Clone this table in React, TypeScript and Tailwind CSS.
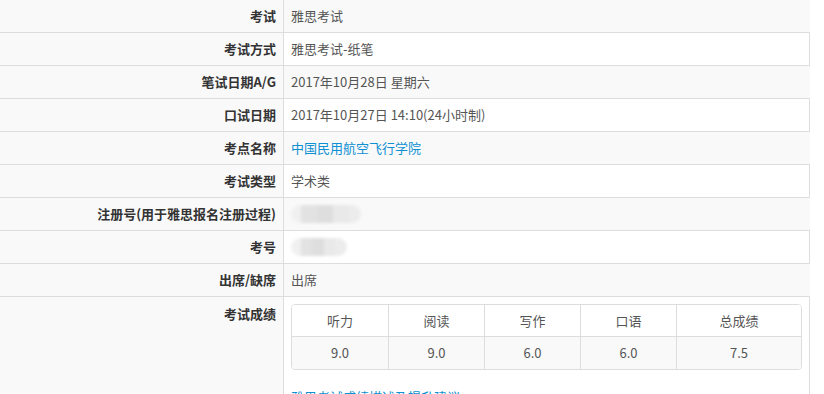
import React from "react";

type Row = {
  label: string;
  value?: React.ReactNode;
};

const font = { fontFamily: '"Noto Sans CJK SC", "Noto Sans", sans-serif' };

function Blur({ width }: { width: number }) {
  // masked personal number, drawn as a soft grey smudge
  return (
    <div className="relative h-[18px]" style={{ width }}>
      <div className="absolute inset-0 flex blur-[1.5px]">
        <div className="w-[10px] rounded-l-full bg-[#f0f0f0]" />
        <div className="flex-1 bg-[#e2e2e2]" />
        <div className="flex-1 bg-[#dedede]" />
        <div className="flex-1 bg-[#e9e9e9]" />
        <div className="w-[12px] rounded-r-full bg-[#ececec]" />
      </div>
    </div>
  );
}

const rows: Row[] = [
  { label: "考试", value: "雅思考试" },
  { label: "考试方式", value: "雅思考试-纸笔" },
  { label: "笔试日期A/G", value: "2017年10月28日 星期六" },
  { label: "口试日期", value: "2017年10月27日 14:10(24小时制)" },
  {
    label: "考点名称",
    value: <span className="text-[#0e90d2]">中国民用航空飞行学院</span>,
  },
  { label: "考试类型", value: "学术类" },
  { label: "注册号(用于雅思报名注册过程)", value: <Blur width={70} /> },
  { label: "考号", value: <Blur width={56} /> },
  { label: "出席/缺席", value: "出席" },
];

const scores = [
  { name: "听力", score: "9.0", w: "w-[97px]" },
  { name: "阅读", score: "9.0", w: "w-[96px]" },
  { name: "写作", score: "6.0", w: "w-[96px]" },
  { name: "口语", score: "6.0", w: "w-[96px]" },
  { name: "总成绩", score: "7.5", w: "flex-1" },
];

export default function App() {
  return (
    <div className="min-h-[394px] bg-white text-[13px]" style={font}>
      <div className="w-[810px]">
        {rows.map((row, i) => {
          const striped = i % 2 === 0;
          return (
            <div key={row.label} className="flex h-[33px] border-b border-[#dddddd]">
              <div className="flex w-[284px] items-center justify-end border-r border-[#dddddd] bg-[#f9f9f9] pr-[7px] font-bold text-[#333333]">
                {row.label}
              </div>
              <div
                className={
                  striped
                    ? "flex flex-1 items-center bg-[#f9f9f9] pl-[7px] text-[#555555]"
                    : "flex flex-1 items-center border-r border-[#dddddd] bg-white pl-[7px] text-[#555555]"
                }
              >
                {row.value}
              </div>
            </div>
          );
        })}
        <div className="flex h-[97px]">
          <div className="w-[284px] border-r border-[#dddddd] bg-[#f9f9f9] pt-[8px] pr-[7px] text-right font-bold leading-[18px] text-[#333333]">
            考试成绩
          </div>
          <div className="flex-1 overflow-hidden border-r border-[#dddddd] bg-white pt-[7px] pl-[7px] pr-[7px]">
            <div className="overflow-hidden rounded-[4px] border border-[#dddddd] text-[#555555]">
              <div className="flex h-[32px] border-b border-[#dddddd] bg-white">
                {scores.map((s, i) => (
                  <div
                    key={s.name}
                    className={`${s.w} flex items-center justify-center ${i < 4 ? "border-r border-[#dddddd]" : ""}`}
                  >
                    {s.name}
                  </div>
                ))}
              </div>
              <div className="flex h-[32px] bg-[#f9f9f9]">
                {scores.map((s, i) => (
                  <div
                    key={s.name}
                    className={`${s.w} flex items-center justify-center ${i < 4 ? "border-r border-[#dddddd]" : ""}`}
                  >
                    {s.score}
                  </div>
                ))}
              </div>
            </div>
            <div className="mt-[17px] text-[#0e90d2]">雅思考试成绩描述及提升建议</div>
          </div>
        </div>
      </div>
    </div>
  );
}
